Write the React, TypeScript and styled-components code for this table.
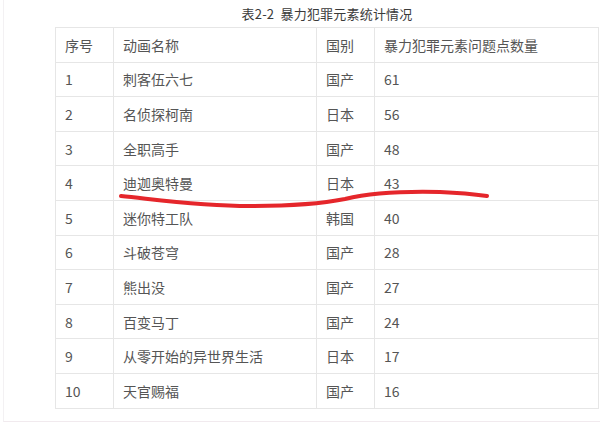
import styled, { createGlobalStyle } from "styled-components";

const GlobalStyle = createGlobalStyle`
    html, body {
        margin: 0;
        padding: 0;
        background: #ffffff;
    }
    body {
        font-family: "Noto Sans CJK SC", "Noto Sans", sans-serif;
    }
`;

const Page = styled.div`
    position: relative;
    width: 600px;
    height: 422px;
    box-sizing: border-box;
    overflow: hidden;
    background: #ffffff;
`;

const Sheet = styled.div`
    margin-left: 3px;
    height: 421px;
    border-left: 1px solid #f3f1f3;
    border-bottom: 1px solid #f1eaee;
    padding-left: 51px;
    padding-right: 2px;
`;

const StatTable = styled.table`
    width: 543px;
    border-collapse: collapse;
    table-layout: fixed;
    color: #555555;
    font-size: 14px;
`;

const Caption = styled.caption`
    height: 27px;
    line-height: 27px;
    font-size: 13px;
    color: #3a3a3a;
    font-weight: normal;
    letter-spacing: 0.2px;
    white-space: pre;
`;

const Col = styled.col<{ $w: number }>`
    width: ${(p) => p.$w}px;
`;

const Row = styled.tr`
    height: 34.6px;
`;

const Cell = styled.td`
    border: 1px solid #e6e6e6;
    padding: 0 0 0 9px;
    text-align: left;
    vertical-align: middle;
    white-space: nowrap;
    overflow: hidden;
`;

const HeadCell = styled.th`
    border: 1px solid #e6e6e6;
    padding: 0 0 0 9px;
    text-align: left;
    vertical-align: middle;
    white-space: nowrap;
    font-weight: normal;
`;

const Scribble = styled.svg`
    position: absolute;
    left: 0;
    top: 0;
    pointer-events: none;
`;

const rows = [
    ["1", "刺客伍六七", "国产", "61"],
    ["2", "名侦探柯南", "日本", "56"],
    ["3", "全职高手", "国产", "48"],
    ["4", "迪迦奥特曼", "日本", "43"],
    ["5", "迷你特工队", "韩国", "40"],
    ["6", "斗破苍穹", "国产", "28"],
    ["7", "熊出没", "国产", "27"],
    ["8", "百变马丁", "国产", "24"],
    ["9", "从零开始的异世界生活", "日本", "17"],
    ["10", "天官赐福", "国产", "16"],
];

export default function App() {
    return (
        <>
            <GlobalStyle />
            <Page>
                <Sheet>
                    <StatTable>
                        <Caption>表2-2  暴力犯罪元素统计情况</Caption>
                        <colgroup>
                            <Col $w={58} />
                            <Col $w={203} />
                            <Col $w={58} />
                            <Col $w={224} />
                        </colgroup>
                        <thead>
                            <Row>
                                <HeadCell>序号</HeadCell>
                                <HeadCell>动画名称</HeadCell>
                                <HeadCell>国别</HeadCell>
                                <HeadCell>暴力犯罪元素问题点数量</HeadCell>
                            </Row>
                        </thead>
                        <tbody>
                            {rows.map((r) => (
                                <Row key={r[0]}>
                                    {r.map((c, i) => (
                                        <Cell key={i}>{c}</Cell>
                                    ))}
                                </Row>
                            ))}
                        </tbody>
                    </StatTable>
                </Sheet>
                {/* red pen mark under row 4 */}
                <Scribble width="600" height="422" viewBox="0 0 600 422">
                    <path
                        d="M121,196 C160,200 200,206 250,206 C290,206 320,204 345,199 C370,193 400,191 440,192 C465,193 480,195 487,196"
                        fill="none"
                        stroke="#e5262b"
                        strokeWidth="4"
                        strokeLinecap="round"
                    />
                </Scribble>
            </Page>
        </>
    );
}
